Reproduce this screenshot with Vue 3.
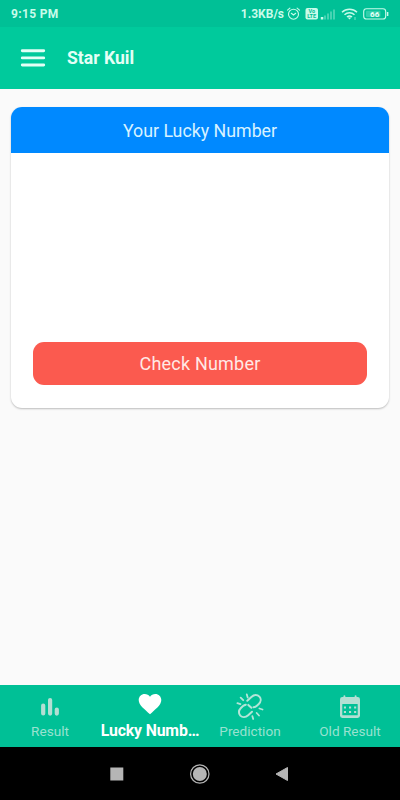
<script setup>
import { ref } from "vue";

let active = ref("lucky");

let tabs = [
  { id: "result", label: "Result" },
  { id: "lucky", label: "Lucky Numb…" },
  { id: "prediction", label: "Prediction" },
  { id: "old", label: "Old Result" },
];
</script>

<template>
  <div class="screen">
    <div class="status">
      <span class="time">9:15 PM</span>
      <span class="speed">1.3KB/s</span>
      <svg class="status-icons" width="104" height="16" viewBox="0 0 104 16">
        <!-- alarm -->
        <g fill="none" stroke="#c9fbea" stroke-width="1.1" stroke-linecap="round">
          <circle cx="7.5" cy="8.2" r="5" />
          <path d="M5.300 7.300l2.200 1.700 2.200-1.700M1.500 4.200l2.400-2M13.500 4.200l-2.400-2" />
        </g>
        <!-- volte -->
        <rect x="19.5" y="2" width="12.5" height="11.5" rx="2" fill="#c9fbea" />
        <text x="25.7" y="7.2" class="volte">Vo</text>
        <text x="25.7" y="12.3" class="volte">LTE</text>
        <!-- signal -->
        <g fill="#c9fbea">
          <rect x="34.8" y="11" width="2.5" height="2.500" />
          <g opacity="0.35">
            <rect x="38" y="9.5" width="2" height="4" />
            <rect x="41" y="7.5" width="2" height="6" />
            <rect x="44" y="5.5" width="2" height="8" />
            <rect x="47" y="3.5" width="2" height="10" />
          </g>
        </g>
        <!-- wifi -->
        <g fill="none" stroke="#c9fbea" stroke-width="1.5">
          <path d="M56 6.2c4.2-4 10.800-4 15 0M58.500 8.700c2.900-2.700 7.100-2.700 10 0M61 11c1.500-1.300 3.500-1.300 5 0" />
        </g>
        <path d="M61.700 11.500l1.800 2 1.800-2z" fill="#c9fbea" />
        <path d="M69 11v3" stroke="#c9fbea" stroke-width="1" opacity="0.600" />
        <!-- battery -->
        <rect x="77.700" y="2.800" width="22" height="10.200" rx="2.800" fill="none" stroke="#c9fbea" stroke-width="1.100" />
        <rect x="80" y="4.800" width="14.500" height="6.200" rx="1" fill="#c9fbea" opacity="0.250" />
        <path d="M101.600 6v4" stroke="#c9fbea" stroke-width="1.500" />
        <text x="88.700" y="10.800" class="battery">66</text>
      </svg>
    </div>

    <header class="header">
      <svg width="26" height="20" viewBox="0 0 26 20">
        <path d="M2.300 2.800h21.400M2.300 9.900h21.400M2.300 17h21.400" stroke="#e3fff6" stroke-width="2.900" stroke-linecap="round" />
      </svg>
      <h1>Star Kuil</h1>
    </header>

    <main class="content">
      <div class="card">
        <div class="card-title"><span>Your Lucky Number</span></div>
        <div class="card-body">
          <button type="button" class="check"><span>Check Number</span></button>
        </div>
      </div>
    </main>

    <nav class="tabs">
      <div v-for="tab in tabs" :key="tab.id" class="tab" :class="{ active: active == tab.id }" @click="active = tab.id">
        <svg v-if="tab.id == 'result'" width="30" height="36" viewBox="0 0 30 36">
          <path d="M8.200 20.500v8M15.100 15.100v13.500M21.800 24.600v4" stroke="#b3dfd3" stroke-width="4.200" stroke-linecap="round" />
        </svg>
        <svg v-else-if="tab.id == 'lucky'" width="30" height="36" viewBox="0 0 30 36">
          <path d="M15 29.200C9.500 24.300 3.700 20 3.700 15C3.700 11.600 6.400 9 9.700 9C11.900 9 13.800 10 15 11.700C16.200 10 18.100 9 20.300 9C23.600 9 26.300 11.600 26.300 15C26.300 20 20.500 24.300 15 29.200Z" fill="#fff" />
        </svg>
        <svg v-else-if="tab.id == 'prediction'" width="30" height="36" viewBox="0 0 30 36">
          <g fill="none" stroke="#b3e5d8" stroke-width="2" stroke-linecap="round">
            <path d="M12.300 15.700L16.400 11.900C19.200 9.400 22.500 9.700 24.400 11.600C26.300 13.700 26 16.900 23.800 18.900L21.600 20.900C20.700 21.700 19.700 22.100 18.500 22.200" />
            <path d="M17 26.700L13.200 30.200C10.500 32.700 7.300 32.600 5.300 30.600C3.400 28.600 3.500 25.300 5.700 23.200L8 21C8.900 20.300 9.700 19.900 10.800 19.700" />
            <path d="M13.300 19.900L16.400 22.800" />
            <path d="M11.800 9.400L12.700 12.500M5.700 12.700L8.200 15.200M2.400 18.200L5.400 19.100M24.400 23.500L27.500 24.500M21.700 28L24 30.500M17.400 31.200L18.200 34" stroke-width="1.800" />
          </g>
        </svg>
        <svg v-else width="30" height="36" viewBox="0 0 30 36">
          <rect x="5" y="12" width="20" height="21" rx="2.400" fill="#b3dfd3" />
          <path d="M9.400 11.300v2M20.600 11.300v2" stroke="#b3dfd3" stroke-width="1.900" stroke-linecap="round" />
          <rect x="7.300" y="19" width="15.400" height="11.300" rx="0.500" fill="#00c096" />
          <path d="M8.900 22.500h2.100M14 22.500h2.100M19.100 22.500h2.100M8.900 26.900h2.100M14 26.900h2.100M19.100 26.900h2.100" stroke="#b3dfd3" stroke-width="2" />
        </svg>
        <span class="label">{{ tab.label }}</span>
      </div>
    </nav>

    <div class="system-nav">
      <svg width="14" height="14" viewBox="0 0 14 14">
        <rect x="0.300" y="0.500" width="13" height="13" fill="#b5b5b5" />
      </svg>
      <svg width="20" height="20" viewBox="0 0 20 20">
        <circle cx="9.800" cy="10" r="9.200" fill="none" stroke="#b5b5b5" stroke-width="1.200" />
        <circle cx="9.800" cy="10" r="7" fill="#b5b5b5" />
      </svg>
      <svg class="back" width="14" height="16" viewBox="0 0 14 16">
        <path d="M1 8L12.500 1.500v13z" fill="#b5b5b5" stroke="#b5b5b5" stroke-linejoin="round" />
      </svg>
    </div>
  </div>
</template>

<style>
body {
  margin: 0;
}
</style>

<style scoped>
.screen {
  width: 400px;
  height: 800px;
  display: flex;
  flex-direction: column;
  overflow: hidden;
  background: #fafafa;
  font-family: Roboto, "Liberation Sans", sans-serif;
}

.status {
  height: 27px;
  box-sizing: border-box;
  padding: 0 10px 0 11px;
  display: flex;
  align-items: center;
  background: #00c096;
  color: #c9fbea;
  font-size: 12px;
  font-weight: 700;
}
.time {
  flex: 1;
  letter-spacing: 0.35px;
}
.speed {
  margin-right: 2px;
}
.volte {
  fill: #00c096;
  font-size: 5.5px;
  text-anchor: middle;
}
.battery {
  fill: #e8fff8;
  font-size: 8px;
  text-anchor: middle;
}

.header {
  height: 62px;
  box-sizing: border-box;
  padding-left: 20px;
  display: flex;
  align-items: center;
  background: #00ca9c;
  color: #e3fff6;
}
h1 {
  margin: 0 0 0 21px;
  font-size: 17.6px;
  font-weight: 700;
}

.content {
  flex: 1;
  padding: 18px 11px;
}
.card {
  height: 301px;
  display: flex;
  flex-direction: column;
  border-radius: 11px;
  overflow: hidden;
  background: #fff;
  box-shadow: 0 1px 2px rgba(0, 0, 0, 0.25);
}
.card-title {
  height: 46px;
  display: flex;
  align-items: center;
  justify-content: center;
  background: #0089ff;
  color: #d7f2ff;
  font-size: 17.8px;
}
.card-body {
  flex: 1;
  display: flex;
  align-items: flex-end;
  padding: 0 22px 22.7px;
}
.check {
  width: 100%;
  height: 43px;
  padding: 0 0 1px;
  border: none;
  border-radius: 11px;
  background: #fb5a4f;
  color: #ffe9e6;
  font-family: inherit;
  font-size: 18px;
  letter-spacing: 0.2px;
}

.tabs {
  height: 62px;
  display: grid;
  grid-template-columns: repeat(4, 100px);
  background: #00c096;
}
.tab {
  min-width: 0;
  display: flex;
  flex-direction: column;
  align-items: center;
  color: #99e2d0;
}
.label {
  white-space: nowrap;
  font-size: 13.6px;
  line-height: 20px;
}
.active .label {
  color: #fff;
  font-size: 15.8px;
  font-weight: 700;
  letter-spacing: -0.15px;
}

.system-nav {
  height: 53px;
  display: flex;
  align-items: center;
  justify-content: center;
  gap: 66px;
  background: #000;
}
.back {
  margin-left: -1.5px;
  margin-right: 1.5px;
}
</style>
